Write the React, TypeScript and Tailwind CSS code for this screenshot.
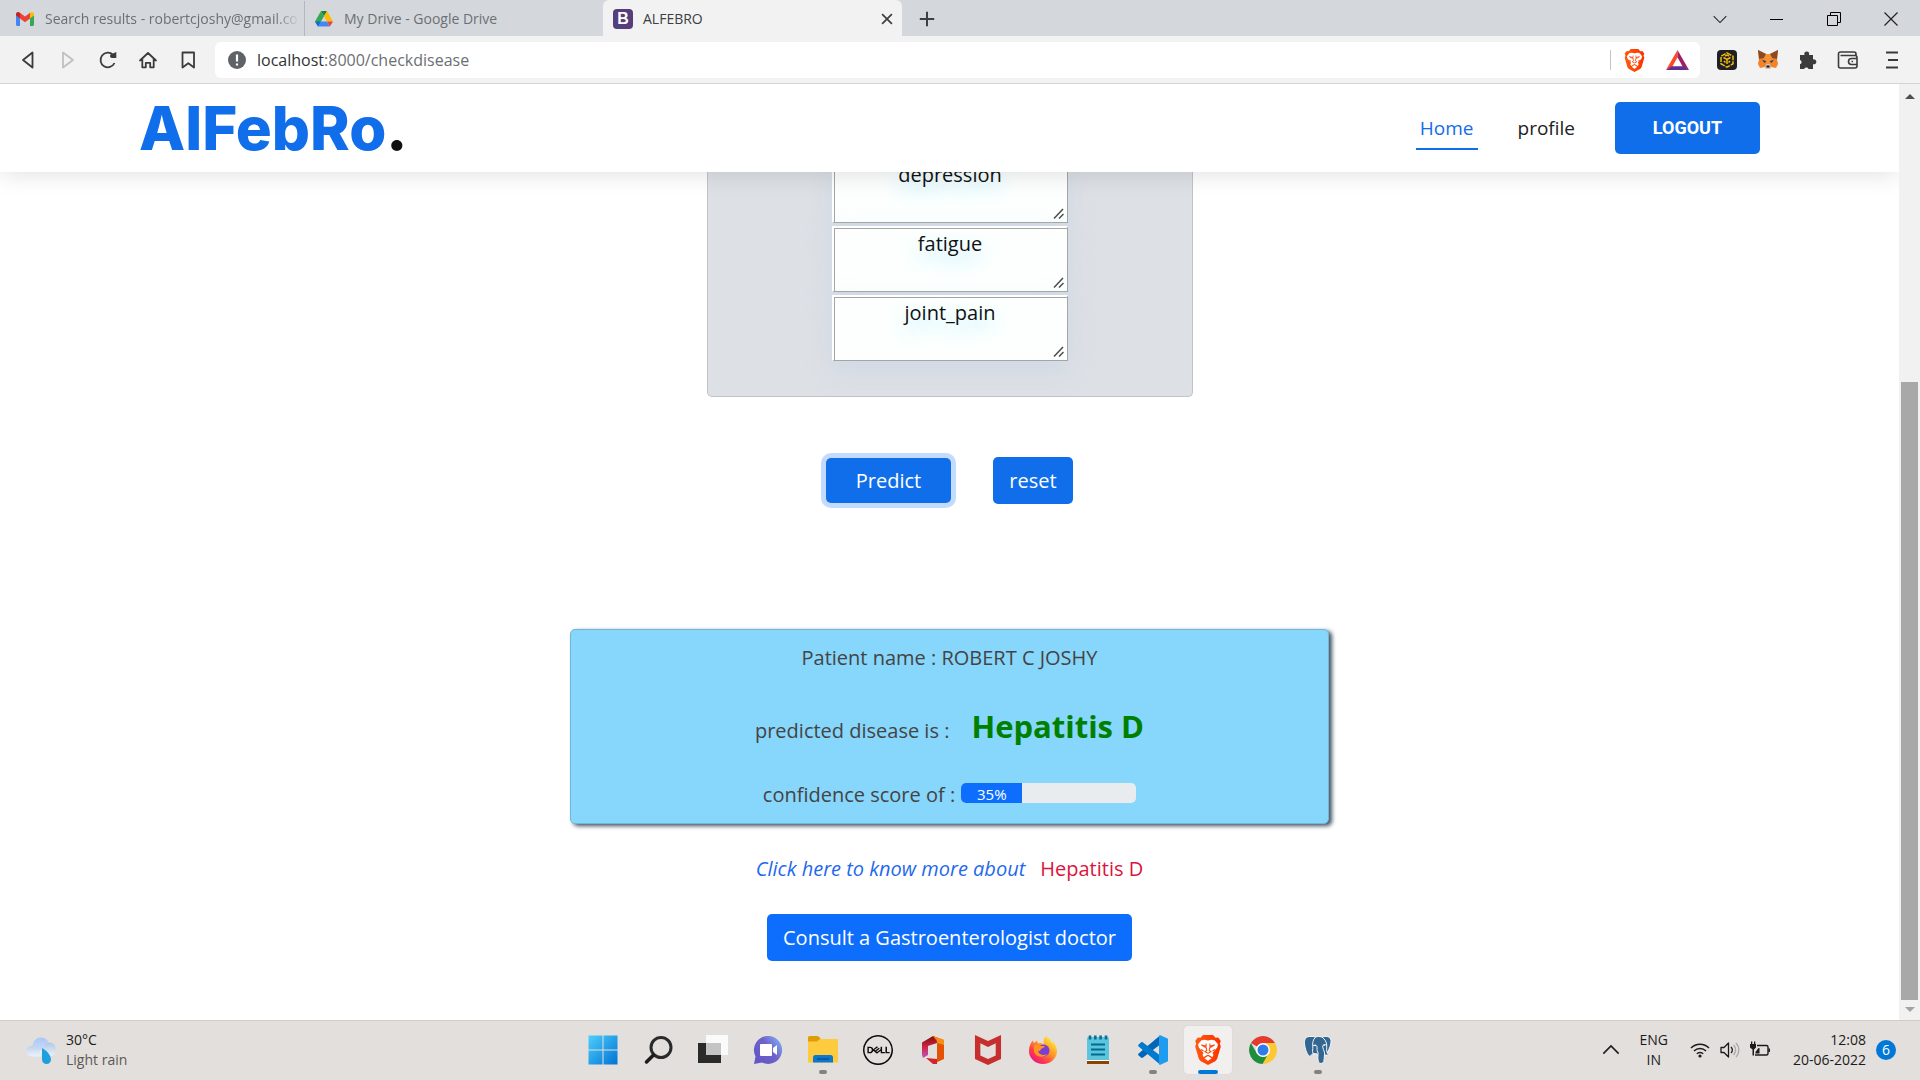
import React from "react";
import { SiDell, SiMcafee } from "react-icons/si";

type Kids = { children: React.ReactNode };

function Svg({ size = 20, box = 20, children }: Kids & { size?: number; box?: number }) {
  return (
    <svg width={size} height={size} viewBox={`0 0 ${box} ${box}`} fill="none" className="shrink-0" aria-hidden="true">
      {children}
    </svg>
  );
}

/* ---------- browser chrome ---------- */

function GmailIcon() {
  return (
    <Svg>
      <path d="M1 5v10.500c0 .8.600 1.500 1.400 1.500H5V9L1 6z" fill="#4285f4" />
      <path d="M15 9v8h2.600c.8 0 1.400-.7 1.400-1.500V5.500L15 9z" fill="#34a853" />
      <path d="M5 3.800v5.700l5 3.700 5-3.700V3.800l-5 3.800z" fill="#ea4335" />
      <path d="M1 5.200v1.300l4 3V3.800C3.200 2.300 1 3.200 1 5.200z" fill="#c5221f" />
      <path d="M15 3.800v5.700l4-3V5.200c0-2-2.200-2.900-4-1.400z" fill="#fbbc04" />
    </Svg>
  );
}

function DriveIcon() {
  return (
    <Svg>
      <path d="M7 2h6l-3 5.200z" fill="#188038" />
      <path d="M7 2l3 5.200L4 17.600 1 12.500z" fill="#34a853" />
      <path d="M13 2l6 10.500h-6L10 7.200z" fill="#fbbc04" />
      <path d="M4 17.600l2.900-5.100h6l3 5.100z" fill="#4285f4" />
      <path d="M13 12.500h6l-3.100 5.100z" fill="#ea4335" />
      <path d="M1 12.500h5.900L4 17.600z" fill="#1967d2" />
    </Svg>
  );
}

function BraveIcon({ size }: { size: number }) {
  return (
    <Svg size={size} box={30}>
      <defs>
        <linearGradient id="brave" x1="2" y1="0" x2="28" y2="0" gradientUnits="userSpaceOnUse">
          <stop stopColor="#ff5a10" /><stop offset="1" stopColor="#fb3200" />
        </linearGradient>
      </defs>
      <path d="M10 0h10l2.500 2.800 2.700-.3 2.600 3.500-1 2.700 1 2.800-3.600 12.300c-.4 1-1.200 1.800-2 2.400L15 30l-7.200-3.800c-.8-.6-1.600-1.400-2-2.400L2.200 11.500l1-2.800-1-2.700 2.600-3.500 2.700.3z" fill="url(#brave)" />
      <path d="M15 5.500l3.500-.700 3 .4L25 9.300l-.8 3.200-4.700 5.500 1 2-1.200 2.300-1.500-1.200L15 19.700l-2.800 1.400-1.500 1.200L9.500 20l1-2-4.700-5.500L5 9.300l3.500-4.100 3-.4z" fill="#fff" />
      <path d="M15 21l3.500 2.200L15 26l-3.500-2.800z" fill="#fff" />
      <path d="M8.500 10l4.300 1.200-.6 1zM21.500 10l-4.300 1.200.6 1z" stroke="#fb4a10" strokeWidth="1.100" />
      <path d="M13.300 8.500l-.5 2.700 1 4.300-1.800 1.200 3 1.500 3-1.500-1.800-1.200 1-4.300-.5-2.700" stroke="#fb4a10" strokeWidth="1.100" />
      <path d="M8 14.500l2.500 1.500M22 14.500L19.500 16" stroke="#fb4a10" strokeWidth="1.200" />
    </Svg>
  );
}

function TabStrip() {
  return (
    <div className="flex h-9 items-stretch bg-[#d4d8dc] pt-px text-sm text-[#6c7074]">
      <div className="flex w-[305px] min-w-0 items-center gap-[10px] border-r border-[#b4b8bc] pr-1 pl-[15px]">
        <GmailIcon />
        <span className="min-w-0 flex-1 whitespace-nowrap [mask-image:linear-gradient(to_right,black_90%,transparent)]">
          Search results - robertcjoshy@gmail.co
        </span>
      </div>
      <div className="flex w-[298px] items-center gap-[10px] pl-[9px]">
        <DriveIcon />
        <span>My Drive - Google Drive</span>
      </div>
      <div className="-mt-px flex w-[299px] items-center gap-[10px] rounded-t-md bg-[#f2f2f2] pt-px pr-[6px] pl-[10px] text-[#3c4043]">
        <span className="flex size-5 items-center justify-center rounded bg-[#563d7c] font-['Liberation_Sans'] text-base font-bold text-white">B</span>
        <span className="flex-1">ALFEBRO</span>
        <button aria-label="Close tab" className="p-[2px]">
          <Svg size={14}><path d="M3 3l14 14M17 3L3 17" stroke="#3c4043" strokeWidth="2.400" /></Svg>
        </button>
      </div>
      <button aria-label="New tab" className="px-4">
        <Svg size={18}><path d="M10 2v16M2 10h16" stroke="#3c4043" strokeWidth="2.200" /></Svg>
      </button>
      <div className="ml-auto flex items-center pr-px">
        <button aria-label="Search tabs" className="flex w-[57px] justify-center">
          <Svg size={14}><path d="M1 6l9 9 9-9" stroke="#222" strokeWidth="1.500" /></Svg>
        </button>
        <button aria-label="Minimize" className="flex w-[57px] justify-center">
          <Svg size={14} box={14}><path d="M0 7.500h13" stroke="#000" /></Svg>
        </button>
        <button aria-label="Restore" className="flex w-[57px] justify-center">
          <Svg size={14} box={14}><path d="M.5 3.500h10v10H.5zM3.500 3V.5h10v10H11" stroke="#000" /></Svg>
        </button>
        <button aria-label="Close window" className="flex w-[57px] justify-center">
          <Svg size={14} box={14}><path d="M.5.5l13 13M13.500.5l-13 13" stroke="#222" strokeWidth="1.200" /></Svg>
        </button>
      </div>
    </div>
  );
}

function FoxIcon() {
  return (
    <Svg size={22} box={22}>
      <path d="M1 1l8 4h4l8-4-1 9 1 5-2 4-5-1-1 2H9l-1-2-5 1-2-4 1-5z" fill="#f0832c" />
      <path d="M1 1l8 4-2 4-5 1zM21 1l-8 4 2 4 5 1z" fill="#8a4a22" />
      <path d="M7 9l2-4h4l2 4-2 6H9z" fill="#f6913a" />
      <path d="M5 11l4 1-1 2zM17 11l-4 1 1 2z" fill="#233447" />
      <path d="M8 18l1-3h4l1 3-1 2H9z" fill="#d7c1b3" />
      <path d="M9.500 16.500h3v2h-3z" fill="#161616" />
    </Svg>
  );
}

function Toolbar() {
  return (
    <div className="flex h-12 items-center border-b border-[#d3d5d7] bg-[#f2f2f2] pt-px pr-[18px] pl-[18px]">
      <div className="flex w-[197px] items-center gap-5">
        <button aria-label="Back">
          <Svg><path d="M14.500 2.500v15L5 10z" stroke="#3b3b3b" strokeWidth="1.800" strokeLinejoin="round" /></Svg>
        </button>
        <button aria-label="Forward">
          <Svg><path d="M5 2.500v15L15 10z" stroke="#c0c0c0" strokeWidth="1.800" strokeLinejoin="round" /></Svg>
        </button>
        <button aria-label="Reload">
          <Svg>
            <path d="M16.500 13A7.300 7.300 0 1 1 15 4.800" stroke="#3b3b3b" strokeWidth="1.800" />
            <path d="M18.300 2v6h-4.500a2.500 2.500 0 0 1-1.300-3.600z" fill="#3b3b3b" />
          </Svg>
        </button>
        <button aria-label="Home page">
          <Svg><path d="M2 10.500L10 3l8 7.500M4.300 9v8.300h3.500v-4.500h4.400v4.500h3.500V9" stroke="#3b3b3b" strokeWidth="1.800" strokeLinejoin="round" strokeLinecap="round" /></Svg>
        </button>
        <button aria-label="Bookmark">
          <Svg><path d="M4.500 2.500h11.500v15l-5.700-4.300-5.800 4.300z" stroke="#3b3b3b" strokeWidth="1.800" strokeLinejoin="round" /></Svg>
        </button>
      </div>
      <div className="flex h-9 min-w-0 flex-1 items-center rounded-md bg-white pr-[11px] pl-3">
        <Svg>
          <circle cx="10" cy="10" r="9" fill="#5f6368" />
          <path d="M10 4.500v7M10 13.500v2" stroke="#fff" strokeWidth="2.200" />
        </Svg>
        <div className="ml-[10px] flex-1 text-base whitespace-nowrap text-[#6b6f73]">
          <span className="text-[#303336]">localhost</span>:8000/checkdisease
        </div>
        <div className="mr-3 h-5 w-px bg-[#c4c4c4]" />
        <button aria-label="Brave Shields" className="mr-5"><BraveIcon size={23} /></button>
        <button aria-label="Brave Rewards">
          <Svg size={23} box={22}>
            <path d="M11 1L0 20l6-3 5-9z" fill="#ff4724" />
            <path d="M11 1l11 19-6-3-5-9z" fill="#9e1f63" />
            <path d="M0 20h22l-5.500-3.500h-11z" fill="#662d91" />
          </Svg>
        </button>
      </div>
      <div className="ml-4 flex items-center gap-[19px]">
        <button aria-label="Binance Wallet">
          <Svg size={22} box={22}>
            <rect x="1" y="1" width="20" height="20" rx="4" fill="#1e2026" />
            <path d="M11 3.800l6 3.500v7.400l-6 3.500-6-3.500V7.300z" stroke="#f0b90b" strokeWidth="1.500" strokeDasharray="5 1" />
            <path d="M7.500 8.500L11 10.500l3.500-2M11 10.500V15M8 12l1.500 1.500M14 12l-1.500 1.500M9 7l2-1 2 1" stroke="#f0b90b" strokeWidth="1.500" />
          </Svg>
        </button>
        <button aria-label="MetaMask"><FoxIcon /></button>
        <button aria-label="Extensions">
          <Svg>
            <path d="M2 5h4.500a2.500 2.500 0 1 1 4.500 0H15v4.500a2.500 2.500 0 1 1 0 4.700V19h-4.500a2.300 2.300 0 0 0-4.300 0H2v-4.700a2.300 2.300 0 0 0 0-4.400z" fill="#3b3b3b" />
          </Svg>
        </button>
        <button aria-label="Wallet">
          <Svg size={22} box={22}>
            <path d="M19 6.500V5a2 2 0 0 0-2-2H3.500A1.800 1.800 0 0 0 1.500 5v12a2 2 0 0 0 2 2H18a2 2 0 0 0 2-2V8.500a2 2 0 0 0-2-2H3.500M20 9.500h-5.500a3 3 0 0 0 0 6H20M14.500 12.500h1.500" stroke="#3b3b3b" strokeWidth="1.600" />
          </Svg>
        </button>
        <button aria-label="Menu" className="ml-1">
          <Svg><path d="M4 2.500h12M6 10h10M4 17.500h12" stroke="#3b3b3b" strokeWidth="1.800" /></Svg>
        </button>
      </div>
    </div>
  );
}

/* ---------- web page ---------- */

function SiteHeader() {
  return (
    <header className="relative z-10 flex h-[88px] shrink-0 items-center justify-between bg-white pr-[139px] pb-px pl-[139px] shadow-[0_0_25px_rgba(0,0,0,0.14)]">
      <h1 className="font-['Inter'] text-[60px] leading-none font-extrabold whitespace-nowrap text-[#106eea]">
        <a href="#home">AlFebRo<span className="text-[#111]">.</span></a>
      </h1>
      <nav className="flex items-center text-[19px] font-medium">
        <a href="#home" className="mr-9 border-b-2 border-[#106eea] px-1 pt-2 pb-[6px] leading-7 text-[#106eea]">Home</a>
        <a href="#profile" className="mr-9 px-1 leading-7 text-[#222]">profile</a>
        <button className="h-[52px] w-[145px] rounded-[5px] bg-[#106eea] font-['Roboto'] text-lg font-bold text-white">LOGOUT</button>
      </nav>
    </header>
  );
}

const symptoms = ["depression", "fatigue", "joint_pain"];

function SymptomPanel() {
  return (
    <div className="-mt-[15px] flex w-[486px] flex-col items-center gap-[3px] rounded-[5px] border border-t-0 border-[#c0c4c8] bg-[#dde0e5] pb-[35px]">
      {symptoms.map((s) => (
        <div key={s} className="relative">
          <textarea
            aria-label={s}
            defaultValue={s}
            className="block h-[66px] w-[236px] resize-none overflow-hidden border border-t-2 border-l-2 border-[#a5a5a5] border-t-white border-l-white bg-[#fcfffe] px-[3px] text-center text-xl leading-8 text-[#111] shadow-[inset_1px_1px_0_#a5a5a5,0_10px_24px_rgba(190,208,230,0.4)] [text-shadow:0_8px_20px_#9fdcff]"
          />
          <span className="pointer-events-none absolute right-1 bottom-1">
            <Svg size={11} box={11}><path d="M1 10.500L10 1M6 10.500L10.500 6" stroke="#4c4c4c" strokeWidth="1.500" /></Svg>
          </span>
        </div>
      ))}
    </div>
  );
}

function ResultCard() {
  const score = 35;
  return (
    <section className="mt-[125px] flex h-[195px] w-2/5 flex-col items-center rounded-[5px] border border-[#6fb7d6] bg-[#87d6fb] pt-3 text-xl leading-8 text-[#444] shadow-[3px_2px_4px_#3f5160]">
      <p>Patient name : ROBERT C JOSHY</p>
      <div className="mt-7 flex items-baseline gap-[22px]">
        <span>predicted disease is :</span>
        <strong className="text-[31px] leading-[48px] font-bold text-[#008000]">Hepatitis D</strong>
      </div>
      <div className="mt-[29px] flex items-center gap-[6px]">
        <span>confidence score of :</span>
        <div role="progressbar" aria-valuenow={score} aria-label="confidence score" className="mb-1 flex h-5 w-[175px] overflow-hidden rounded-[5px] bg-[#e9ecef]">
          <div className="bg-[#0d6efd] text-center text-[15px] leading-[22px] text-white" style={{ width: `${score}%` }}>{score}%</div>
        </div>
      </div>
    </section>
  );
}

function Page() {
  return (
    <div className="flex min-w-0 flex-1 flex-col overflow-hidden bg-white">
      <SiteHeader />
      <main className="flex flex-1 flex-col items-center">
        <SymptomPanel />
        <div className="mt-[60px] flex items-center gap-[42px] text-xl text-white">
          <button className="h-[45px] w-[125px] rounded-[5px] bg-[#106eea] shadow-[0_0_0_5px_#c3dbff]">Predict</button>
          <button className="h-[47px] w-20 rounded-[5px] bg-[#106eea]">reset</button>
        </div>
        <ResultCard />
        <p className="mt-[29px] flex gap-[15px] text-xl leading-8">
          <a href="#more" className="text-[#1f69ec] italic">Click here to know more about</a>
          <span className="text-[#dc143c]">Hepatitis D</span>
        </p>
        <button className="mt-[29px] h-[47px] rounded-[5px] bg-[#0d6efd] px-4 text-xl text-white">Consult a Gastroenterologist doctor</button>
      </main>
    </div>
  );
}

function Scrollbar() {
  return (
    <div className="flex w-[21px] flex-col items-center bg-[#f1f1f1] pt-2 pb-[5px]" aria-hidden="true">
      <Svg size={10} box={10}><path d="M0 7l5-5 5 5z" fill="#505050" /></Svg>
      <div className="flex-[280]" />
      <div className="w-[17px] flex-[618] bg-[#a8a8a8]" />
      <div className="h-[5px]" />
      <Svg size={10} box={10}><path d="M0 2l5 5 5-5z" fill="#a3a3a3" /></Svg>
    </div>
  );
}

/* ---------- taskbar ---------- */

function WindowsIcon() {
  return (
    <Svg size={30} box={30}>
      <defs>
        <linearGradient id="win" x1="0" y1="0" x2="30" y2="30" gradientUnits="userSpaceOnUse">
          <stop stopColor="#4fd0fd" /><stop offset="1" stopColor="#0071d2" />
        </linearGradient>
      </defs>
      <path d="M.5.5h14v14H.5zM15.500.5h14v14h-14zM.5 15.500h14v14H.5zM15.500 15.500h14v14h-14z" fill="url(#win)" />
    </Svg>
  );
}

function SearchIcon() {
  return (
    <Svg size={30} box={30}>
      <circle cx="18" cy="12.500" r="10" stroke="#2a2a2a" strokeWidth="3" />
      <path d="M10.500 20L3.500 27" stroke="#1c1c1c" strokeWidth="3.500" strokeLinecap="round" />
    </Svg>
  );
}

function TaskViewIcon() {
  return (
    <Svg size={30} box={30}>
      <rect x="0" y="8" width="23" height="20" fill="#2a2a2a" />
      <rect x="8" y="0" width="22" height="20" fill="#fafafa" />
      <rect x="8" y="8" width="15" height="12" fill="#c4c4c4" />
    </Svg>
  );
}

function ChatIcon() {
  return (
    <Svg size={30} box={30}>
      <defs>
        <linearGradient id="chat" x1="4" y1="22" x2="28" y2="4" gradientUnits="userSpaceOnUse">
          <stop stopColor="#6458c8" /><stop offset=".5" stopColor="#6f62c9" /><stop offset="1" stopColor="#7faef5" />
        </linearGradient>
      </defs>
      <path d="M15 1a14 14 0 1 1-6 26.600L1 29l1.500-7.500A14 14 0 0 1 15 1z" fill="url(#chat)" />
      <rect x="7" y="9" width="12" height="12" rx="1" fill="#fff" />
      <path d="M20 13l4-3v10l-4-3z" fill="#fff" />
    </Svg>
  );
}

function FolderIcon() {
  return (
    <Svg size={30} box={30}>
      <path d="M0 2.500A1.500 1.500 0 0 1 1.500 1H10l3 3v6H0z" fill="#dd9d07" />
      <path d="M0 6.500h9l3-2.500h18v23.500H0z" fill="#ffcb3e" />
      <path d="M5 27.500v-5a2.500 2.500 0 0 1 2.500-2.500h15a2.500 2.500 0 0 1 2.500 2.500v5z" fill="#0c78cd" />
      <path d="M9 24h12" stroke="#0a4f92" strokeWidth="1.500" />
    </Svg>
  );
}

function OfficeIcon() {
  return (
    <Svg size={30} box={30}>
      <defs>
        <linearGradient id="off" x1="5" y1="2" x2="5" y2="24" gradientUnits="userSpaceOnUse">
          <stop stopColor="#8f0e10" /><stop offset=".5" stopColor="#d12a4c" /><stop offset="1" stopColor="#b75bd0" />
        </linearGradient>
      </defs>
      <path d="M4 7.500L15 1l4 2v5l-9 3v9l-5 3-1-3z" fill="url(#off)" />
      <path d="M15 1l11 4v19l-11 5 4-5V7z" fill="#e35205" />
      <path d="M15 1l11 4v5l-7-2V5z" fill="#f78f12" />
      <path d="M8 23l11 1v5h-4z" fill="#d3242c" />
    </Svg>
  );
}

function FirefoxIcon() {
  return (
    <Svg size={30} box={30}>
      <defs>
        <linearGradient id="ff" x1="26" y1="4" x2="6" y2="28" gradientUnits="userSpaceOnUse">
          <stop stopColor="#fff044" /><stop offset=".4" stopColor="#ff9a26" /><stop offset=".75" stopColor="#ff3750" /><stop offset="1" stopColor="#e31587" />
        </linearGradient>
      </defs>
      <path d="M18 1c2 2 5 3 6 7 1-.500.8-1.600.8-1.600 3 3 4.200 6.600 4.200 9.600a14 13 0 0 1-28 0C1 11 3 8 4.500 5.500L6 8l3-2.500 1 3c3-1 5 0 6 1-1-3-.500-6 2-8.500z" fill="url(#ff)" />
      <circle cx="15.500" cy="15.500" r="6" fill="#7a3fd0" />
      <path d="M6 11c3-2 5-1 7 0h4c-1 2-3 2-4 3-1 3-3 2-3 2 1 4 6 5 9 3-2 4-12 4-13-3z" fill="#ff9423" />
    </Svg>
  );
}

function NotepadIcon() {
  return (
    <Svg size={30} box={30}>
      <rect x="4" y="2" width="22" height="26" rx="1.500" fill="#5cc5de" />
      <path d="M4 26h22v3H4z" fill="#8a4300" />
      <path d="M4 25.500h22" stroke="#fff" />
      <path d="M8 9.500h14M8 14.500h14M8 19.500h14" stroke="#05688f" strokeWidth="1.800" />
      <path d="M7 .5v4M12.300.5v4M17.600.5v4M23 .5v4" stroke="#0b6e93" strokeWidth="2.600" />
    </Svg>
  );
}

function CodeIcon() {
  return (
    <Svg size={30} box={30}>
      <path d="M22 .5l1.500 8L5 22.500c-.8.600-1.500.500-2 0L.6 20.400c-.6-.600-.6-1.300 0-1.900z" fill="#0066b8" />
      <path d="M22 29.500l1.500-8L5 7.500c-.8-.600-1.500-.500-2 0L.6 9.600c-.6.600-.6 1.300 0 1.900z" fill="#007acc" />
      <path d="M22.500.3L30 3.800v22.400l-7.500 3.500c-1 .400-1.500 0-1.500-.700V1c0-.700.6-1.100 1.500-.7z" fill="#1f9cf0" />
    </Svg>
  );
}

function ChromeIcon() {
  return (
    <Svg size={30} box={30}>
      <path d="M15 15L2.900 8A14 14 0 0 1 27.100 8z" fill="#e33b2e" />
      <path d="M15 15V8h12.100A14 14 0 0 1 15 29z" fill="#fcc934" />
      <path d="M2.900 8L9 18.500l6 3.500 4-1-4.500 8A14 14 0 0 1 2.900 8z" fill="#1e8e3e" />
      <circle cx="15" cy="15" r="7" fill="#fff" />
      <circle cx="15" cy="15" r="5.500" fill="#2f7bea" />
    </Svg>
  );
}

function ElephantIcon() {
  return (
    <Svg size={30} box={30}>
      <path d="M8 1.500C3 1 1 4.500 1.500 9c.4 4 2 9 4 11.500 1.500 1.500 3-.5 4.500-2l5 1.500c-.3 3 0 6 .8 7.500 1 1.600 4.200 1.200 5-1 .5-2 .4-4.500.7-6.500 2.500.3 4.500 0 6-1.500-1.500.2-3 .2-3.500-.4 2.500-4 4.500-9.500 4-13-1-4-5.500-4.300-9-3-2.500-1-5-.600-6.500 0-1.500-.6-3-.8-4.500-.6z" fill="#336791" stroke="#f3f5f7" strokeWidth="1" />
      <path d="M12.500 2.100C10 4.500 9.300 8 9.800 11.500c.3 2.500-.8 4.500.2 7M9.800 11c1.500-1.200 3.800-1.200 4.200.5.300 2-.6 3.500 1 6v2.500M19 2.100c3 2 4.500 5 4.700 8-1.500-.8-3.500-.6-4 .9-.3 2.500 2 4.500 2 9M23.700 10c.3 3-.8 5.500.8 8M10 18.500c1.500.5 3 .3 4.500-.5" stroke="#f3f5f7" strokeWidth="1" />
      <circle cx="12.200" cy="10.500" r=".8" fill="#fff" />
      <circle cx="21.300" cy="10" r=".8" fill="#fff" />
    </Svg>
  );
}

function WeatherIcon() {
  return (
    <Svg size={30} box={30}>
      <defs>
        <linearGradient id="cloud" x1="15" y1="2" x2="15" y2="22" gradientUnits="userSpaceOnUse">
          <stop stopColor="#a9c6f5" /><stop offset="1" stopColor="#dce8fa" />
        </linearGradient>
        <linearGradient id="puff" x1="15" y1="8" x2="15" y2="22" gradientUnits="userSpaceOnUse">
          <stop stopColor="#b3c8e6" /><stop offset="1" stopColor="#eef3fb" />
        </linearGradient>
      </defs>
      <circle cx="15" cy="11" r="8.500" fill="url(#cloud)" />
      <path d="M7 15h17v6.500H7z" fill="#e3ecf9" />
      <ellipse cx="7" cy="16" rx="7" ry="5.500" fill="url(#puff)" />
      <ellipse cx="23.500" cy="14.500" rx="6.500" ry="7" fill="url(#puff)" />
      <path d="M16 13c4 2 9 7 9 11.500a4.500 4.500 0 0 1-9 0z" fill="#1d9fe0" />
    </Svg>
  );
}

const apps: { name: string; icon: React.ReactNode; open?: boolean; active?: boolean }[] = [
  { name: "Start", icon: <WindowsIcon /> },
  { name: "Search", icon: <SearchIcon /> },
  { name: "Task view", icon: <TaskViewIcon /> },
  { name: "Chat", icon: <ChatIcon /> },
  { name: "File Explorer", icon: <FolderIcon />, open: true },
  { name: "Dell", icon: <SiDell size={30} color="#0c0c0c" /> },
  { name: "Office", icon: <OfficeIcon /> },
  { name: "McAfee", icon: <SiMcafee size={30} color="#c62f2d" /> },
  { name: "Firefox", icon: <FirefoxIcon /> },
  { name: "Notepad", icon: <NotepadIcon /> },
  { name: "Visual Studio Code", icon: <CodeIcon />, open: true },
  { name: "Brave", icon: <BraveIcon size={30} />, active: true },
  { name: "Chrome", icon: <ChromeIcon /> },
  { name: "pgAdmin", icon: <ElephantIcon />, open: true },
];

function Taskbar() {
  return (
    <footer className="grid h-[60px] shrink-0 grid-cols-[1fr_auto_1fr] items-center border-t border-[#cfcdcb] bg-[#e3dfdc] pb-px text-sm leading-5 text-[#1b1b1b]">
      <div className="flex items-center gap-[10px] pl-[26px]">
        <WeatherIcon />
        <div>
          <div>30°C</div>
          <div className="text-[#5b5957]">Light rain</div>
        </div>
      </div>
      <div className="flex gap-[7px]">
        {apps.map((a) => (
          <button
            key={a.name}
            aria-label={a.name}
            className={`relative flex size-12 items-center justify-center rounded ${a.active ? "bg-[#f2f0ef] shadow-[0_0_1px_#bbb]" : ""}`}
          >
            {a.icon}
            {a.open && <span className="absolute bottom-0 h-1 w-2 rounded-full bg-[#85817e]" />}
            {a.active && <span className="absolute bottom-0 h-1 w-5 rounded-full bg-[#0078d7]" />}
          </button>
        ))}
      </div>
      <div className="flex items-center justify-end pr-6">
        <button aria-label="Show hidden icons" className="mr-5">
          <Svg size={18}><path d="M1.500 14L10 5.500l8.500 8.500" stroke="#1b1b1b" strokeWidth="1.700" /></Svg>
        </button>
        <div className="mr-[22px] text-center">
          <div>ENG</div>
          <div>IN</div>
        </div>
        <div className="mr-[19px] flex gap-[10px]">
          <Svg>
            <path d="M1 8a12.700 12.700 0 0 1 18 0M4 11a8.500 8.500 0 0 1 12 0M6.800 13.800a4.500 4.500 0 0 1 6.400 0" stroke="#1b1b1b" strokeWidth="1.500" />
            <circle cx="10" cy="16" r="1.600" fill="#1b1b1b" />
          </Svg>
          <Svg>
            <path d="M1 7.500v5h3L8.500 17V3L4 7.500z" stroke="#1b1b1b" strokeWidth="1.300" strokeLinejoin="round" />
            <path d="M11 7a4 4 0 0 1 0 6" stroke="#1b1b1b" strokeWidth="1.300" />
            <path d="M13.500 5a7 7 0 0 1 0 10M16 3a10 10 0 0 1 0 14" stroke="#aaa7a5" strokeWidth="1.300" />
          </Svg>
          <Svg>
            <path d="M7 5.500h9.500a1.500 1.500 0 0 1 1.500 1.500v6.500a1.500 1.500 0 0 1-1.500 1.500H5" stroke="#1b1b1b" strokeWidth="1.400" />
            <path d="M0 4h6v3.500L4 9.500v6H2.500v-6L0 7.500zM1 1.500h1.300V4H1zM4 1.500h1.300V4H4zM5.500 12l3-4h1v5.500h-4zM18.500 8.500H20v3.500h-1.500z" fill="#1b1b1b" />
          </Svg>
        </div>
        <div className="mr-[10px] w-[77px] text-right whitespace-nowrap">
          <div>12:08</div>
          <div>20-06-2022</div>
        </div>
        <span className="flex size-5 items-center justify-center rounded-full bg-[#0078d7] text-sm text-white">6</span>
      </div>
    </footer>
  );
}

export default function App() {
  return (
    <div className="flex h-screen flex-col overflow-hidden bg-white font-['Open_Sans',sans-serif]">
      <TabStrip />
      <Toolbar />
      <div className="flex min-h-0 flex-1">
        <Page />
        <Scrollbar />
      </div>
      <Taskbar />
    </div>
  );
}
